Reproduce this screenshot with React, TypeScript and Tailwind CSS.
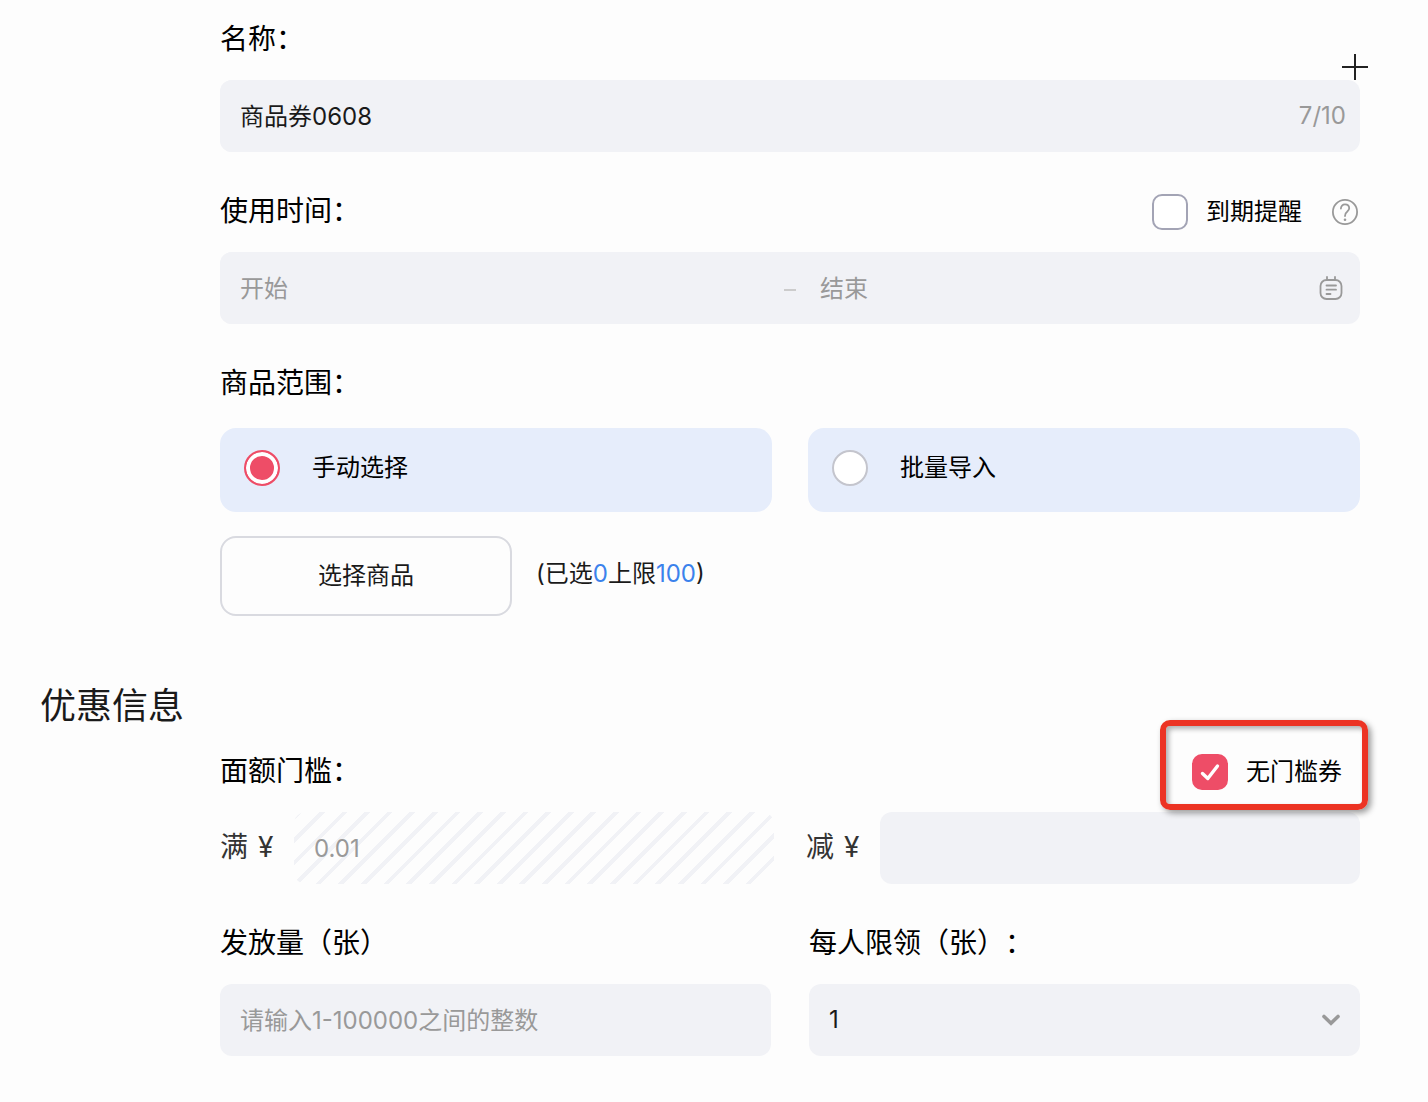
import { useState, type ReactNode } from "react";
import { clsx } from "clsx";

const FIELD =
  "h-[72px] w-full min-w-0 rounded-xl bg-[#f1f2f6] px-5 text-2xl text-[#1a1a1a] outline-none placeholder:text-[#999999]";

interface FieldLabelProps {
  htmlFor?: string;
  children: ReactNode;
}

function FieldLabel({ htmlFor, children }: FieldLabelProps) {
  return (
    <label
      htmlFor={htmlFor}
      className="self-start text-[28px] leading-[38px] whitespace-nowrap [text-spacing-trim:space-all]"
    >
      {children}
    </label>
  );
}

interface CheckboxProps {
  label: string;
  checked: boolean;
  onChange: (checked: boolean) => void;
}

function Checkbox({ label, checked, onChange }: CheckboxProps) {
  return (
    <label className="flex items-center gap-[18px] text-2xl whitespace-nowrap">
      <span className="relative size-9">
        <input
          type="checkbox"
          checked={checked}
          onChange={(e) => onChange(e.target.checked)}
          className="block size-9 appearance-none rounded-[10px] border-2 border-[#a3a4b5] bg-white checked:border-[#ee4d67] checked:bg-[#ee4d67]"
        />
        {checked && (
          <svg viewBox="0 0 36 36" className="pointer-events-none absolute inset-0" fill="none">
            <path
              d="M10.5 19.5 15.8 24.5 25.5 12"
              stroke="white"
              strokeWidth="3.4"
              strokeLinecap="round"
              strokeLinejoin="round"
            />
          </svg>
        )}
      </span>
      {label}
    </label>
  );
}

interface RadioCardProps {
  label: string;
  checked: boolean;
  onSelect: () => void;
}

function RadioCard({ label, checked, onSelect }: RadioCardProps) {
  return (
    <label className="flex h-[84px] items-center rounded-2xl bg-[#e6edfb] px-6 pb-1 text-2xl">
      <input
        type="radio"
        name="scope"
        checked={checked}
        onChange={onSelect}
        className={clsx(
          "mr-8 size-9 appearance-none rounded-full border-2",
          checked
            ? "border-[#ee4d67] bg-[#ee4d67] shadow-[inset_0_0_0_4px_white]"
            : "border-[#c4c5cd] bg-white"
        )}
      />
      {label}
    </label>
  );
}

function HelpIcon() {
  return (
    <svg viewBox="0 0 26 26" className="size-[26px]" fill="none" stroke="#999999">
      <circle cx="13" cy="13" r="12.1" strokeWidth="1.8" />
      <path
        d="M8.9 9.6C8.9 7.1 10.6 5.4 13 5.4s4.2 1.6 4.2 3.9c0 1.6-.9 2.5-2.1 3.5-1.4 1.1-2.1 1.9-2.1 4.2"
        strokeWidth="1.8"
        strokeLinecap="round"
      />
      <circle cx="13" cy="20.8" r="1.3" fill="#999999" stroke="none" />
    </svg>
  );
}

function CalendarIcon() {
  return (
    <svg
      viewBox="0 0 24 24"
      className="size-6"
      fill="none"
      stroke="#999999"
      strokeWidth="1.8"
      strokeLinecap="round"
    >
      <rect x="1.5" y="4" width="21" height="19" rx="6" />
      <path d="M8 1v2.5M16 1v2.5M7.5 9.5h9.5M7.5 13.7h9.5M7.5 18h4" />
    </svg>
  );
}

export default function App() {
  const [name, setName] = useState("商品券0608");
  const [remind, setRemind] = useState(false);
  const [scope, setScope] = useState("manual");
  const [noThreshold, setNoThreshold] = useState(true);

  return (
    <main className="min-h-screen bg-[#fdfdfd] pt-5 pb-11 font-[Inter,'Noto_Sans_CJK_SC',sans-serif] text-black">
      <section className="pr-[68px] pl-[220px]">
        {/* Name */}
        <div className="relative mb-5 flex h-10">
          <FieldLabel htmlFor="name">名称：</FieldLabel>
          <button type="button" aria-label="添加" className="absolute -right-2 -bottom-5">
            <svg viewBox="0 0 26 26" className="size-[26px]" stroke="#222222" strokeWidth="2">
              <path d="M13 0v26M0 13h26" />
            </svg>
          </button>
        </div>
        <div className="flex items-center rounded-xl bg-[#f1f2f6] pr-[14px]">
          <input
            id="name"
            value={name}
            maxLength={10}
            onChange={(e) => setName(e.target.value)}
            className={clsx(FIELD, "pb-1")}
          />
          <span className="text-2xl text-[#999999]">{name.length}/10</span>
        </div>

        {/* Valid period */}
        <div className="mt-10 mb-5 flex h-10 items-center justify-between">
          <FieldLabel htmlFor="start">使用时间：</FieldLabel>
          <div className="flex items-center gap-[30px]">
            <Checkbox label="到期提醒" checked={remind} onChange={setRemind} />
            <button type="button" aria-label="说明" className="mr-[2px]">
              <HelpIcon />
            </button>
          </div>
        </div>
        <div className="grid grid-cols-[1fr_auto_1fr] items-center rounded-xl bg-[#f1f2f6]">
          <input id="start" placeholder="开始" className={FIELD} />
          <span className="mt-1 h-[2px] w-3 bg-[#cccccc]" />
          <div className="flex items-center pr-[17px] pl-1">
            <input aria-label="结束" placeholder="结束" className={FIELD} />
            <button type="button" aria-label="选择日期">
              <CalendarIcon />
            </button>
          </div>
        </div>

        {/* Product scope */}
        <div className="mt-10 mb-6 flex h-10">
          <FieldLabel>商品范围：</FieldLabel>
        </div>
        <div className="grid grid-cols-2 gap-9">
          <RadioCard
            label="手动选择"
            checked={scope === "manual"}
            onSelect={() => setScope("manual")}
          />
          <RadioCard
            label="批量导入"
            checked={scope === "batch"}
            onSelect={() => setScope("batch")}
          />
        </div>
        <div className="mt-6 flex items-center gap-6">
          <button
            type="button"
            className="h-20 w-[292px] rounded-2xl border-2 border-[#d9dae0] text-2xl text-[#1a1a1a]"
          >
            选择商品
          </button>
          <p className="pb-1 text-2xl text-[#1a1a1a]">
            (已选<span className="text-[#3b82ec]">0</span>上限
            <span className="text-[#3b82ec]">100</span>)
          </p>
        </div>
      </section>

      <h2 className="mt-[68px] mb-6 pl-10 text-4xl leading-[44px] text-[#1a1a1a]">优惠信息</h2>

      <section className="pr-[68px] pl-[220px]">
        {/* Amount and threshold */}
        <div className="mb-5 flex h-10 items-center justify-between">
          <FieldLabel htmlFor="threshold">面额门槛：</FieldLabel>
          <div className="relative mr-[18px]">
            <Checkbox label="无门槛券" checked={noThreshold} onChange={setNoThreshold} />
            <span className="pointer-events-none absolute -top-[34px] -right-[26px] -bottom-5 -left-8 rounded-[10px] border-6 border-[#ec3323] shadow-[3px_3px_6px_rgba(0,0,0,0.4),inset_3px_3px_5px_rgba(0,0,0,0.3)]" />
          </div>
        </div>
        <div className="grid grid-cols-2 gap-8">
          <div className="flex items-center">
            <label
              htmlFor="threshold"
              className="flex w-[74px] shrink-0 gap-2.5 pb-[2px] text-[28px] text-[#333333]"
            >
              <span>满</span>
              <span>¥</span>
            </label>
            <input
              id="threshold"
              placeholder="0.01"
              disabled={noThreshold}
              className={clsx(
                FIELD,
                "disabled:bg-transparent disabled:bg-[repeating-linear-gradient(135deg,transparent_0_2px,#f1f2f6_2px_6px,transparent_6px_16px)]"
              )}
            />
          </div>
          <div className="flex items-center">
            <label
              htmlFor="discount"
              className="flex w-[74px] shrink-0 gap-2.5 pb-[2px] text-[28px] text-[#333333]"
            >
              <span>减</span>
              <span>¥</span>
            </label>
            <input id="discount" className={FIELD} />
          </div>
        </div>

        {/* Quantity limits */}
        <div className="mt-10 grid grid-cols-2 gap-[38px]">
          <div>
            <div className="mb-5 flex h-10">
              <FieldLabel htmlFor="total">发放量（张）</FieldLabel>
            </div>
            <input id="total" placeholder="请输入1-100000之间的整数" className={FIELD} />
          </div>
          <div>
            <div className="mb-5 flex h-10">
              <FieldLabel htmlFor="limit">每人限领（张）：</FieldLabel>
            </div>
            <div className="relative">
              <select id="limit" defaultValue="1" className={clsx(FIELD, "appearance-none")}>
                <option>1</option>
                <option>2</option>
                <option>3</option>
              </select>
              <svg
                viewBox="0 0 18 12"
                className="pointer-events-none absolute top-[30px] right-5 h-3 w-[18px]"
                fill="none"
              >
                <path
                  d="M2 2.5 9 9.2 16 2.5"
                  stroke="#999999"
                  strokeWidth="3.6"
                  strokeLinecap="round"
                />
              </svg>
            </div>
          </div>
        </div>
      </section>
    </main>
  );
}
